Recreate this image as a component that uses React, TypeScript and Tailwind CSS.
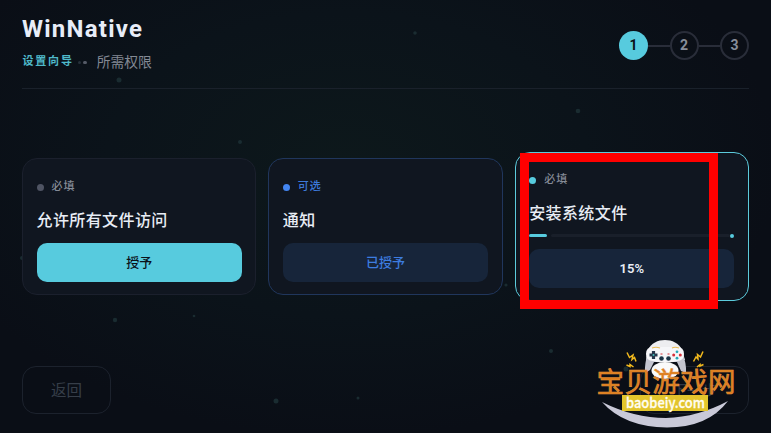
import React from 'react';

interface PermissionCard {
  tag: string;
  title: string;
  action: string;
  card: string;
  dot: string;
  tagColor: string;
  button: string;
  progress?: number;
}

const cards: PermissionCard[] = [
  {
    tag: '必填',
    title: '允许所有文件访问',
    action: '授予',
    card: 'h-[137px] border-[#1b202d] pt-[20px]',
    dot: 'bg-[#4f5463]',
    tagColor: 'text-[#858b97]',
    button: 'bg-[#57cbde] text-[#0b1219]',
  },
  {
    tag: '可选',
    title: '通知',
    action: '已授予',
    card: 'h-[137px] border-[#20365c] pt-[20px]',
    dot: 'bg-[#4385f0]',
    tagColor: 'text-[#3d79d9]',
    button: 'bg-[#17253a] text-[#3d7de0]',
  },
  {
    tag: '必填',
    title: '安装系统文件',
    action: '15%',
    card: 'h-[149px] border-[#5ccbdc] pt-[19px]',
    dot: 'bg-[#57cbde]',
    tagColor: 'text-[#858b97]',
    button: 'bg-[#17253a] text-[#e8edf5]',
    progress: 8.5,
  },
];

const particles = [
  { x: 119, y: 80, r: 2.5 },
  { x: 240, y: 142, r: 2 },
  { x: 578, y: 111, r: 2.3 },
  { x: 415, y: 33, r: 1.8 },
  { x: 22, y: 258, r: 2 },
  { x: 115, y: 320, r: 2.2 },
  { x: 194, y: 316, r: 1.3 },
  { x: 506, y: 285, r: 1.6 },
  { x: 551, y: 351, r: 2 },
  { x: 276, y: 401, r: 2.5 },
  { x: 358, y: 398, r: 1.5 },
  { x: 626, y: 369, r: 2.5 },
];

const Steps: React.FC = () => (
  <div className="flex items-center text-[14px] font-bold">
    <div className="flex items-center justify-center size-[29px] rounded-full bg-[#57cbde] text-[#0b1219]">1</div>
    <div className="w-[21.5px] h-[2px] bg-[#292d39]"></div>
    <div className="flex items-center justify-center size-[29px] rounded-full border-2 border-[#292d39] text-[#878d99]">2</div>
    <div className="w-[21.5px] h-[2px] bg-[#292d39]"></div>
    <div className="flex items-center justify-center size-[29px] rounded-full border-2 border-[#292d39] text-[#878d99]">3</div>
  </div>
);

const Card: React.FC<{ data: PermissionCard }> = ({ data }) => (
  <div className={`rounded-[15px] border bg-[#101620] px-[13.5px] ${data.card}`}>
    <div className="flex items-center h-4">
      <span className={`size-[7px] rounded-full ${data.dot}`}></span>
      <span className={`ml-[8px] text-[11px] font-medium tracking-[1px] leading-4 ${data.tagColor}`}>{data.tag}</span>
    </div>
    <h2 className="mt-[14px] h-6 text-[16px] font-medium leading-6 tracking-[0.4px] text-[#e8edf5] whitespace-nowrap">{data.title}</h2>
    {data.progress !== undefined && (
      <div className="flex items-center mt-[8px] h-[3px]">
        <span className="h-[3px] rounded-full bg-[#57cbde]" style={{ width: `${data.progress}%` }}></span>
        <span className="ml-[4px] flex-1 h-[3px] rounded-full bg-[#191f2a]"></span>
        <span className="size-[4px] rounded-full bg-[#57cbde]"></span>
      </div>
    )}
    <div
      className={`flex items-center justify-center h-[39px] rounded-[10px] text-[13px] font-medium ${data.progress !== undefined ? 'mt-[12px] font-semibold' : 'mt-[10px]'} ${data.button}`}
    >
      {data.action}
    </div>
  </div>
);

const Watermark: React.FC = () => (
  <svg className="absolute left-[590px] top-[333px]" width="160" height="100" viewBox="590 333 160 100">
    <path d="M648 350C651 343 658 340 665 340C672 340 679 343 682 350L685 360H646Z" fill="#ededf0" />
    <path d="M645 373C644.5 366 646 360 647 355H683C685 360 686.5 366 686 373L681 371L677 362H654L650 370Z" fill="#c3c4cf" />
    <path d="M653 347H677Q684 347 684 354Q684 361 677 361Q672 363 665 362Q658 363 653 361Q646 361 646 354Q646 347 653 347Z" fill="#f6f6f9" />
    <ellipse cx="665" cy="370.5" rx="13.5" ry="8.5" fill="#fafafa" />
    <path d="M652 348Q656 346.5 660 348M672 348Q675 346.5 679 348" fill="none" stroke="#e7b954" strokeWidth="1.1" />
    <path d="M653.5 351v8M649.5 355h8" stroke="#25364b" strokeWidth="3.2" />
    <circle cx="653.5" cy="355" r="1" fill="#3cb8b4" />
    <circle cx="677" cy="351.8" r="1.4" fill="#26a7b8" />
    <circle cx="677" cy="358.2" r="1.4" fill="#26a7b8" />
    <circle cx="673.7" cy="355" r="1.5" fill="#d6303a" />
    <circle cx="680.3" cy="355" r="1.5" fill="#d6303a" />
    <circle cx="661.5" cy="358.5" r="2.3" fill="#1c3446" />
    <circle cx="668.5" cy="358.5" r="2.3" fill="#1c3446" />
    <path d="M660.5 354h2M667.5 354h2" stroke="#d6303a" strokeWidth="1" />
    <g fill="none" stroke="#f2b91d" strokeWidth="1.5">
      <path d="M627 352.5L629.5 357.500L633 355L632 359.500L634.500 357.500L636 361.500" />
      <path d="M626.500 365L630 366.500L630 364.500L633.500 367" />
      <path d="M703 351.500L700.500 357L697.500 354.500L698 359L696 357L693.500 361.500" />
      <path d="M703.500 364.500L700 366L700 364.500L697 367" />
    </g>
    <path d="M602 402Q634 418 666 418Q698 417 728 401Q708 427.5 667 427.5Q624 427 602 402Z" fill="#c9c9d8" />
    <text
      x="596.5"
      y="391.5"
      textLength="139"
      fontSize="27.5"
      fontWeight="400"
      fontFamily="'Noto Sans CJK SC', sans-serif"
      fill="#dd7d1c"
      stroke="#e2913c"
      strokeWidth="0.6"
    >
      宝贝游戏网
    </text>
    <rect x="622" y="395" width="86" height="16" fill="#e3c52c" />
    <text
      x="626"
      y="407.5"
      textLength="79"
      lengthAdjust="spacingAndGlyphs"
      fontSize="14.5"
      fontWeight="500"
      fontFamily="'Noto Sans CJK SC', sans-serif"
      fill="#fffdf0"
      stroke="#fffdf0"
      strokeWidth="0.3"
    >
      baobeiy.com
    </text>
  </svg>
);

const App: React.FC = () => {
  return (
    <div className="relative flex flex-col w-[771px] h-[433px] overflow-hidden px-[22px] bg-[#0a0e16] bg-[radial-gradient(ellipse_at_45%_38%,#0d181b_0%,#0b131a_40%,#0a0e16_72%)] font-[Roboto,'Noto_Sans_CJK_SC',sans-serif]">
      <svg className="absolute inset-0" width="771" height="433">
        {particles.map((p, index) => (
          <circle key={index} cx={p.x} cy={p.y} r={p.r} fill="#1a2c31" />
        ))}
      </svg>

      <header className="relative flex justify-between h-[89px] pt-[14px] border-b border-[#1a212b]">
        <div>
          <h1 className="h-[30px] text-[24px] font-bold leading-[30px] tracking-[1.25px] text-[#e8edf8]">WinNative</h1>
          <div className="flex items-center mt-[8px] h-5">
            <span className="ml-[0.5px] pt-px text-[11px] font-bold tracking-[1.8px] text-[#4fb9ca]">设置向导</span>
            <span className="ml-[4px] size-[3px] rounded-full bg-[#26303a]"></span>
            <span className="ml-[2px] w-[4px] h-[3px] rounded-full bg-[#555b67]"></span>
            <span className="ml-[10px] text-[13.8px] text-[#838994]">所需权限</span>
          </div>
        </div>
        <div className="pt-[17px]">
          <Steps />
        </div>
      </header>

      <main className="relative grid grid-cols-3 gap-3 items-center h-[275px]">
        {cards.map((card) => (
          <Card key={card.title} data={card} />
        ))}
      </main>

      <footer className="relative flex justify-between mt-[2px]">
        <div className="flex items-center justify-center w-[89px] h-[48px] pt-[3px] rounded-[14px] border border-[#1c222d] text-[15.5px] text-[#363e49]">返回</div>
        <div className="flex items-center justify-center w-[109px] h-[48px] pt-[2px] rounded-[14px] border border-[#1c222d] text-[15px] text-[#303945]">下一步</div>
      </footer>

      {/* highlight frame around the install card */}
      <div className="absolute left-[520px] top-[153px] w-[198px] h-[156px] border-[9px] border-[#ff0000]"></div>
      <Watermark />
    </div>
  );
};

export default App;
